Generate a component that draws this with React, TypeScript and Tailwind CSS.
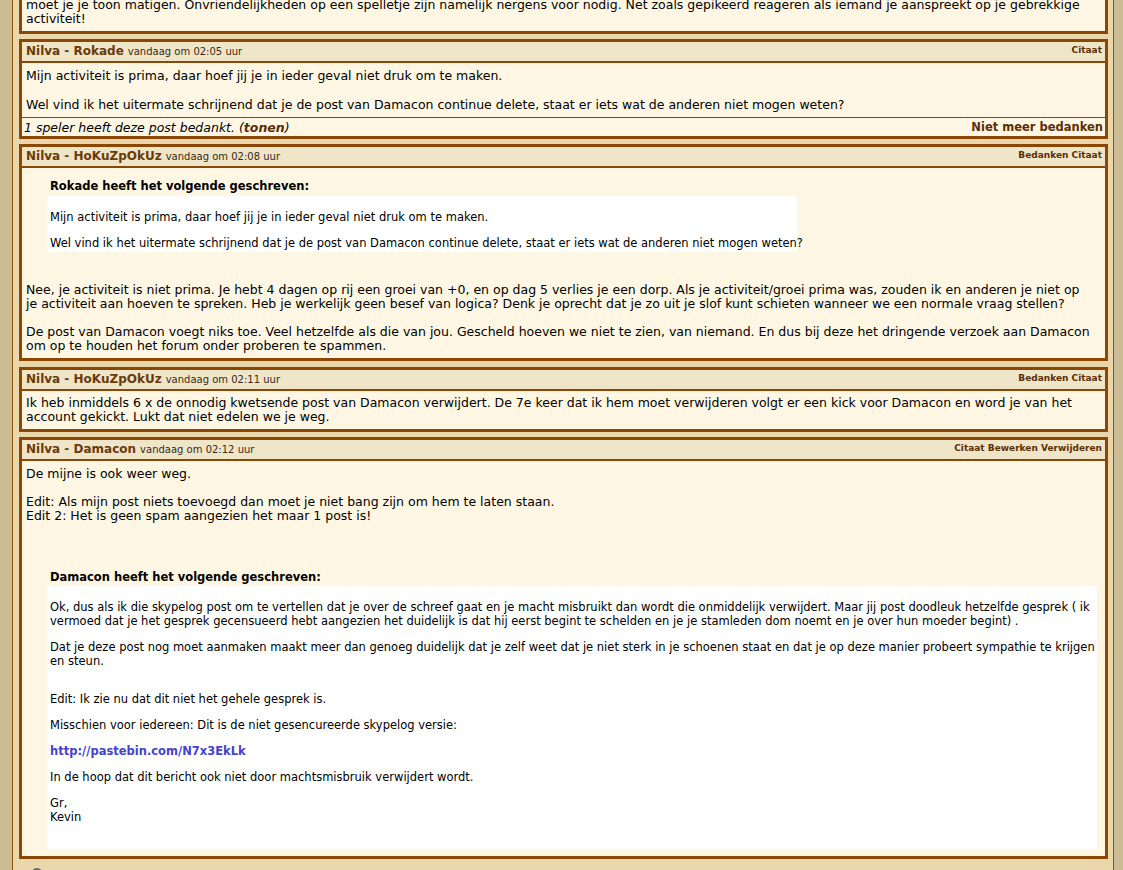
import React from "react";

function Header({ name, time, actions }: { name: string; time: string; actions: string }) {
  return (
    <div className="flex h-[21px] items-center justify-between border-b-2 border-[#8a4706] bg-[#efe5c9] pb-[2px] pl-[4px] pr-[3px]">
      <div className="flex items-baseline whitespace-nowrap">
        <span className="text-[12px] font-bold text-[#6b3a0a]">Nilva - {name}</span>
        <span className="ml-[4px] text-[10px] text-[#3a2a14]">{time}</span>
      </div>
      <div className="whitespace-nowrap text-[9px] font-bold text-[#5c2e04]">{actions}</div>
    </div>
  );
}

function Post({
  name,
  time,
  actions,
  gap = "mt-[6px]",
  children,
}: {
  name: string;
  time: string;
  actions: string;
  gap?: string;
  children: React.ReactNode;
}) {
  return (
    <div className={`${gap} border-[3px] border-[#8a4706] bg-[#fff7e4]`}>
      <Header name={name} time={time} actions={actions} />
      {children}
    </div>
  );
}

const Blank = () => <div className="h-[14px]" />;

export default function App() {
  return (
    <div className="flex h-[870px] overflow-hidden bg-[#e9d6aa] font-['DejaVu_Sans',Verdana,sans-serif] text-black">
      <div className="w-[12px] shrink-0 bg-[#cbbc96]" />
      <div className="w-px shrink-0 bg-[#8b5514]" />
      <div className="w-[6px] shrink-0" />
      <main className="w-[1089px] shrink-0">
        {/* Post 1 (cut off) */}
        <div className="-mt-[2px] border-x-[3px] border-b-[3px] border-[#8a4706] bg-[#fff7e4]">
          <div className="whitespace-nowrap px-[4px] pb-[5px] text-[12.5px] leading-[14px]">
            <div>
              moet je je toon matigen. Onvriendelijkheden op een spelletje zijn namelijk nergens voor nodig. Net zoals gepikeerd reageren als iemand je aanspreekt op je gebrekkige
            </div>
            <div>activiteit!</div>
          </div>
        </div>

        {/* Post 2 */}
        <div className="mt-[5px] border-[3px] border-[#8a4706] bg-[#fff7e4]">
          <Header name="Rokade" time="vandaag om 02:05 uur" actions="Citaat" />
          <div className="whitespace-nowrap px-[4px] pt-[6px] pb-[5px] text-[12.5px] leading-[14px]">
            <div>Mijn activiteit is prima, daar hoef jij je in ieder geval niet druk om te maken.</div>
            <div className="h-[15px]" />
            <div>
              Wel vind ik het uitermate schrijnend dat je de post van Damacon continue delete, staat er iets wat de anderen niet mogen weten?
            </div>
          </div>
          <div className="flex h-[19px] items-end justify-between whitespace-nowrap border-t border-[#8a4706] pb-[1px] pl-[2px] pr-[2px] leading-[15px]">
            <span className="text-[12.5px] italic">
              1 speler heeft deze post bedankt. (<b className="text-[#5a2d05]">tonen</b>)
            </span>
            <span className="text-[11.5px] font-bold text-[#5a2d05]">Niet meer bedanken</span>
          </div>
        </div>

        {/* Post 3 */}
        <Post name="HoKuZpOkUz" time="vandaag om 02:08 uur" actions="Bedanken Citaat" gap="mt-[5px]">
          <div className="whitespace-nowrap px-[4px] pt-[11px] pb-[5px] text-[12.5px] leading-[14px]">
            <div className="ml-[21px]">
              <div className="pl-[3px] text-[11.5px] font-bold leading-[14px]">Rokade heeft het volgende geschreven:</div>
              <div className="mt-[3px] w-[750px] bg-white pl-[3px] pt-[14px] pb-[2px] text-[11.5px] leading-[14px]">
                <div>Mijn activiteit is prima, daar hoef jij je in ieder geval niet druk om te maken.</div>
                <div className="mt-[12px]">
                  Wel vind ik het uitermate schrijnend dat je de post van Damacon continue delete, staat er iets wat de anderen niet mogen weten?
                </div>
              </div>
            </div>
            <div className="mt-[31px]">
              Nee, je activiteit is niet prima. Je hebt 4 dagen op rij een groei van +0, en op dag 5 verlies je een dorp. Als je activiteit/groei prima was, zouden ik en anderen je niet op
            </div>
            <div>
              je activiteit aan hoeven te spreken. Heb je werkelijk geen besef van logica? Denk je oprecht dat je zo uit je slof kunt schieten wanneer we een normale vraag stellen?
            </div>
            <Blank />
            <div>
              De post van Damacon voegt niks toe. Veel hetzelfde als die van jou. Gescheld hoeven we niet te zien, van niemand. En dus bij deze het dringende verzoek aan Damacon
            </div>
            <div>om op te houden het forum onder proberen te spammen.</div>
          </div>
        </Post>

        {/* Post 4 */}
        <Post name="HoKuZpOkUz" time="vandaag om 02:11 uur" actions="Bedanken Citaat">
          <div className="whitespace-nowrap px-[4px] pt-[5px] pb-[5px] text-[12.5px] leading-[14px]">
            <div>
              Ik heb inmiddels 6 x de onnodig kwetsende post van Damacon verwijdert. De 7e keer dat ik hem moet verwijderen volgt er een kick voor Damacon en word je van het
            </div>
            <div>account gekickt. Lukt dat niet edelen we je weg.</div>
          </div>
        </Post>

        {/* Post 5 */}
        <Post name="Damacon" time="vandaag om 02:12 uur" actions="Citaat Bewerken Verwijderen" gap="mt-[5px]">
          <div className="whitespace-nowrap px-[4px] pt-[6px] pb-[7px] text-[12.5px] leading-[14px]">
            <div>De mijne is ook weer weg.</div>
            <Blank />
            <div>Edit: Als mijn post niets toevoegd dan moet je niet bang zijn om hem te laten staan.</div>
            <div>Edit 2: Het is geen spam aangezien het maar 1 post is!</div>
            <div className="ml-[21px] mt-[47px]">
              <div className="pl-[3px] text-[11.5px] font-bold leading-[14px]">Damacon heeft het volgende geschreven:</div>
              <div className="mt-[2px] w-[1050px] bg-white pl-[3px] pt-[14px] pb-[25px] text-[11.5px] leading-[14px]">
                <div>
                  Ok, dus als ik die skypelog post om te vertellen dat je over de schreef gaat en je macht misbruikt dan wordt die onmiddelijk verwijdert. Maar jij post doodleuk hetzelfde gesprek ( ik
                </div>
                <div>
                  vermoed dat je het gesprek gecensueerd hebt aangezien het duidelijk is dat hij eerst begint te schelden en je je stamleden dom noemt en je over hun moeder begint) .
                </div>
                <div className="mt-[12px]">
                  Dat je deze post nog moet aanmaken maakt meer dan genoeg duidelijk dat je zelf weet dat je niet sterk in je schoenen staat en dat je op deze manier probeert sympathie te krijgen
                </div>
                <div>en steun.</div>
                <div className="mt-[24px]">Edit: Ik zie nu dat dit niet het gehele gesprek is.</div>
                <div className="mt-[12px]">Misschien voor iedereen: Dit is de niet gesencureerde skypelog versie:</div>
                <div className="mt-[12px] font-bold text-[#4343cf]">http://pastebin.com/N7x3EkLk</div>
                <div className="mt-[12px]">In de hoop dat dit bericht ook niet door machtsmisbruik verwijdert wordt.</div>
                <div className="mt-[12px]">Gr,</div>
                <div>Kevin</div>
              </div>
            </div>
          </div>
        </Post>

        <div className="ml-[12px] mt-[9px] h-[12px] w-[12px] rounded-full border-2 border-[#6b6b6b] bg-[#d8d8d8]" />
      </main>
      <div className="w-[5px] shrink-0" />
      <div className="w-px shrink-0 bg-[#8b5514]" />
      <div className="flex-1 bg-[#cbbc96]" />
    </div>
  );
}
